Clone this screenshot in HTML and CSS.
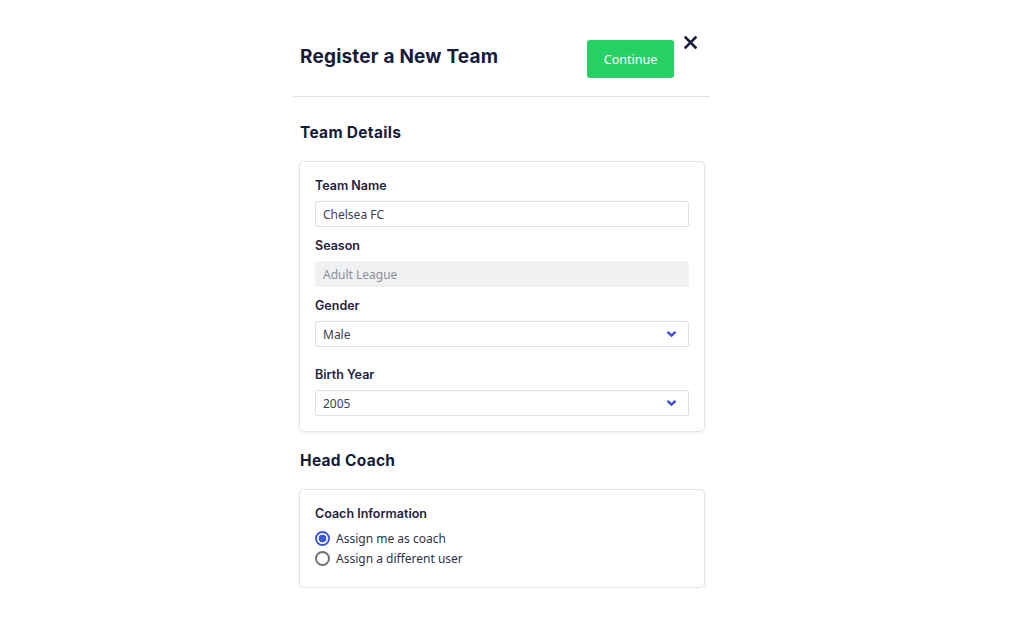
FILE: index.html
```html
<!DOCTYPE html>
<html lang="en">
<head>
<meta charset="utf-8">
<title>Register a New Team</title>
<link rel="stylesheet" href="styles.css">
</head>
<body>
<div class="page">
  <div class="panel">
    <header class="header">
      <h1 class="title">Register a New Team</h1>
      <button class="btn-continue" type="button">Continue</button>
      <button class="btn-close" type="button" aria-label="Close">
        <svg width="13" height="13" viewBox="0 0 13 13"><path d="M1.5 1.5 L11.5 11.5 M11.5 1.5 L1.5 11.5" stroke="#141a3a" stroke-width="2.6" stroke-linecap="square"/></svg>
      </button>
    </header>
    <main class="content">
      <h2 class="section-title section-first">Team Details</h2>
      <section class="card">
        <div class="field">
          <label class="label">Team Name</label>
          <div class="input">Chelsea FC</div>
        </div>
        <div class="field">
          <label class="label">Season</label>
          <div class="input input-disabled">Adult League</div>
        </div>
        <div class="field">
          <label class="label">Gender</label>
          <div class="input select"><span>Male</span>
            <svg class="chev" width="11" height="8" viewBox="0 0 11 8"><path d="M1.5 1.8 L5.5 5.6 L9.5 1.8" fill="none" stroke="#3a4fd6" stroke-width="2.4"/></svg>
          </div>
        </div>
        <div class="field field-gap">
          <label class="label">Birth Year</label>
          <div class="input select"><span>2005</span>
            <svg class="chev" width="11" height="8" viewBox="0 0 11 8"><path d="M1.5 1.8 L5.5 5.6 L9.5 1.8" fill="none" stroke="#3a4fd6" stroke-width="2.4"/></svg>
          </div>
        </div>
      </section>
      <h2 class="section-title section-second">Head Coach</h2>
      <section class="card card-coach">
        <div class="label">Coach Information</div>
        <div class="radios">
          <div class="radio-row"><span class="radio radio-on"></span><span>Assign me as coach</span></div>
          <div class="radio-row"><span class="radio"></span><span>Assign a different user</span></div>
        </div>
      </section>
    </main>
  </div>
</div>
</body>
</html>
```

FILE: styles.css
```css
* { box-sizing: border-box; }
html, body { margin: 0; padding: 0; background: #ffffff; }
body { font-family: "Noto Sans", "Open Sans", sans-serif; color: #23283d; }

.page {
  display: flex;
  padding-left: 293px;
}
.panel {
  width: 417px;
}
.header {
  display: flex;
  align-items: center;
  padding: 40px 0 18px 7px;
  border-bottom: 1px solid #dfe2e7;
}
.title {
  flex: 1;
  margin: 0 0 4px 0;
  font-family: "Inter", "Lato", sans-serif;
  font-weight: 700;
  font-size: 19px;
  line-height: 24px;
  color: #161b3a;
  letter-spacing: 0.2px;
}
.btn-continue {
  width: 87px;
  height: 38px;
  border: 0;
  border-radius: 3px;
  background: #26d163;
  color: #ffffff;
  font-family: "Noto Sans", sans-serif;
  font-size: 12.5px;
  padding: 0;
}
.btn-close {
  align-self: flex-start;
  margin: -4px 13px 0 10px;
  width: 13px;
  height: 13px;
  padding: 0;
  border: 0;
  background: none;
  display: flex;
}
.content {
  padding: 0 5px 0 6px;
}
.section-title {
  margin: 18px 0 18px 1px;
  font-family: "Inter", "Lato", sans-serif;
  font-weight: 700;
  font-size: 15.5px;
  line-height: 20px;
  color: #161b3a;
  letter-spacing: 0.3px;
}
.section-first { margin-top: 26px; }
.section-second { margin-top: 19px; }
.card {
  border: 1px solid #e3e5e9;
  border-radius: 5px;
  box-shadow: 0 1px 3px rgba(20, 30, 60, 0.08);
  padding: 14px 15px 15px 15px;
}
.field + .field { margin-top: 9px; }
.field.field-gap { margin-top: 18px; }
.label {
  display: block;
  font-family: "Inter", "Lato", sans-serif;
  font-weight: 600;
  font-size: 12.5px;
  line-height: 18px;
  color: #1e2340;
  padding-top: 1px;
  margin-bottom: 6px;
}
.input {
  height: 26px;
  border: 1px solid #dcdfe4;
  border-radius: 2px;
  padding: 0 7px;
  display: flex;
  align-items: center;
  font-size: 12px;
  color: #3c4150;
}
.input-disabled {
  background: #f0f1f3;
  border-color: #f0f1f3;
  color: #8b9099;
}
.select { justify-content: space-between; padding-right: 11px; }
.chev { display: block; }
.card-coach { padding-top: 14px; padding-bottom: 19px; }
.card-coach .label { margin-bottom: 5px; }
.radios { display: flex; flex-direction: column; }
.radio-row {
  display: flex;
  align-items: center;
  gap: 6px;
  height: 20px;
  font-size: 12px;
  color: #2e3347;
}
.radio {
  width: 15px;
  height: 15px;
  border-radius: 50%;
  border: 2px solid #6d7178;
  background: #fff;
}
.radio-on {
  border-color: #3b55d9;
  background: radial-gradient(circle, #3b55d9 0 3.6px, #ffffff 4.2px);
}
```
